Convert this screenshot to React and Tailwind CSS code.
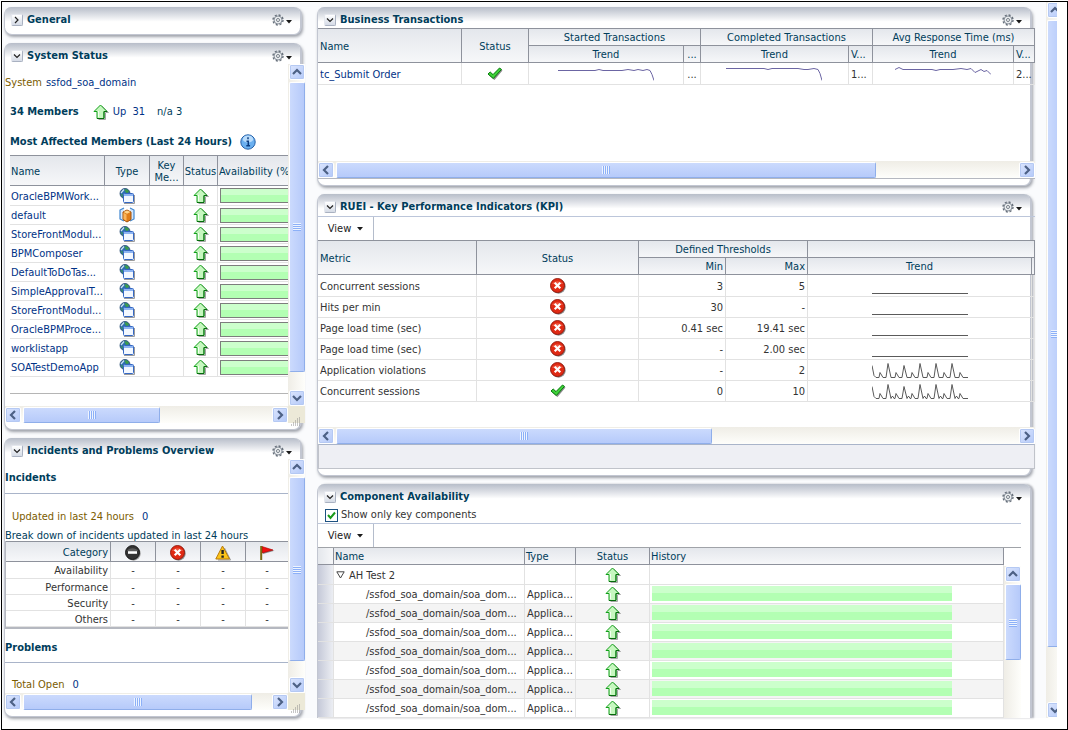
import clsx from 'clsx'

const members = [
  ['OracleBPMWork...', 'app'],
  ['default', 'box'],
  ['StoreFrontModul...', 'app'],
  ['BPMComposer', 'app'],
  ['DefaultToDoTas...', 'app'],
  ['SimpleApprovalT...', 'app'],
  ['StoreFrontModul...', 'app'],
  ['OracleBPMProce...', 'app'],
  ['worklistapp', 'app'],
  ['SOATestDemoApp', 'app'],
]

const flat = '0,14 96,14'

// one tall spike every 16px with a small bump in between
function spikes(noisy) {
  const pts = ['0,2', '2,12', '4,14']
  for (let i = 0; i < 6; i++) {
    const x = i * 16
    pts.push(`${x + 7},14`, `${x + 8},9`, `${x + 11},14`)
    if (i < 5) {
      pts.push(`${x + 14},14`, `${x + 16},${i === 1 ? 2 : 0}`, `${x + 19},14`)
      if (noisy) pts.push(`${x + 20},12`, `${x + 21},12`, `${x + 22},14`)
    }
  }
  pts.push('96,14')
  return pts.join(' ')
}

const metrics = [
  { name: 'Concurrent sessions', ok: false, min: '3', max: '5', trend: flat },
  { name: 'Hits per min', ok: false, min: '30', max: '-', trend: flat },
  { name: 'Page load time (sec)', ok: false, min: '0.41 sec', max: '19.41 sec', trend: flat },
  { name: 'Page load time (sec)', ok: false, min: '-', max: '2.00 sec', trend: flat },
  { name: 'Application violations', ok: false, min: '-', max: '2', trend: spikes(false) },
  { name: 'Concurrent sessions', ok: true, min: '0', max: '10', trend: spikes(true) },
]

const started = '0,4 37,4 41,3 45,4 64,4 70,3 76,4 80,3 85,4 89,3 92,4 94,8 96,14'
const completed = '0,2 38,2 42,3 46,2 72,2 78,3 82,3 88,2 92,3 94,7 96,14'
const response = '0,3 4,1 8,3 37,3 41,4 45,3 58,3 66,2 72,3 76,2 80,6 84,4 86,3 89,5 92,4 96,8'

const head = 'border-r border-b border-[#8e929c] bg-linear-to-b from-[#e4e7ec] to-[#f6f7f9] font-normal text-[#003d5b] px-0 pt-0.5 pb-0'
const box = 'border-r border-b border-[#e2e2e2] p-0'
const cell = 'border-r border-b border-[#e2e2e2] px-0 pt-0.5 pb-0'

function UpIcon() {
  return (
    <svg width="16" height="16" viewBox="0 0 16 16" className="inline-block shrink-0 align-middle">
      <path d="M12.500 8.500h3L9 2M12.500 9v6.500h-7" fill="none" stroke="#a5a5a5" />
      <path d="M7.500 1L1 7.500H4V14.500H11V7.500H14Z" fill="#c6f7bf" stroke="#12a01a" strokeLinejoin="round" />
      <path d="M11 14.500V7.500h3M4 14.500h7" fill="none" stroke="#056b0c" />
      <path d="M5.500 7v6" stroke="#f2fff0" />
    </svg>
  )
}

function AppIcon() {
  return (
    <svg width="16" height="16" viewBox="0 0 16 16" className="inline-block align-middle">
      <circle cx="6" cy="5.500" r="5" fill="#2c6fae" stroke="#24466e" strokeWidth=".8" />
      <path d="M5.500 1.500c2-.8 4 .2 4.500 2L8 5.500 6.500 4z" fill="#3d9b4c" />
      <path d="M1.500 6l2 .5L4 9.500z" fill="#3d9b4c" />
      <path d="M2 5L5 1.500" stroke="#cfe4f5" strokeWidth="1.200" />
      <path d="M5 15.500H15.500V7" fill="none" stroke="#9b9b9b" />
      <rect x="4.500" y="5.500" width="10" height="9" rx="1" fill="#f3f8ff" stroke="#3568c4" />
      <path d="M5 6h9v2H5z" fill="#8db4f2" />
    </svg>
  )
}

function BoxIcon() {
  return (
    <svg width="16" height="16" viewBox="0 0 16 16" className="inline-block align-middle">
      <path d="M5 1L1 3v9l4 2M11 1l4 2v9l-4 2" fill="#d5e6fa" stroke="#3f86d0" strokeWidth="1.200" />
      <path d="M8 3l4 2v7.500L8 15l-4-2.500V5z" fill="#e07d18" stroke="#a0500a" />
      <path d="M4.500 5L8 3.500 11.500 5 8 6.800z" fill="#ffd48a" />
      <path d="M7.500 7.500v6.500L4.500 12V5.700z" fill="#f9b55c" />
    </svg>
  )
}

function InfoIcon() {
  return (
    <svg width="16" height="16" viewBox="0 0 16 16" className="shrink-0" role="img" aria-label="Information">
      <circle cx="8" cy="8" r="7.200" fill="#6bb0f0" stroke="#2460a8" />
      <ellipse cx="8" cy="5" rx="5.200" ry="3.600" fill="#b9dcfb" />
      <path d="M6.500 7.200H8.300v4.300M6.300 11.700h3.800M8 3.300v2" stroke="#0c3c80" strokeWidth="1.500" fill="none" />
    </svg>
  )
}

function CheckIcon() {
  return (
    <svg width="16" height="14" viewBox="0 0 16 14" className="inline-block align-middle">
      <path d="M2 8.500L4 6.500l3 2.500L13.500 2l2 1.500L7.500 13z" fill="#8c8c8c" />
      <path d="M1 7L3.200 5l2.800 2.600L12.500 1l2 1.400L6.300 11.500z" fill="#3fd23a" stroke="#067a0b" strokeWidth="1" strokeLinejoin="round" />
    </svg>
  )
}

function ErrorIcon() {
  return (
    <svg width="16" height="16" viewBox="0 0 16 16" className="inline-block align-middle">
      <circle cx="8.500" cy="8.500" r="7.200" fill="#8c8c8c" />
      <circle cx="7.500" cy="7.500" r="7" fill="#e02a14" stroke="#8e1408" strokeWidth=".9" />
      <path d="M2 6a6 4.500 0 0 1 11 0z" fill="#ee5a44" />
      <path d="M4.700 4.700l5.600 5.600M10.300 4.700l-5.600 5.600" stroke="#fff" strokeWidth="2.200" />
    </svg>
  )
}

function FatalIcon() {
  return (
    <svg width="16" height="16" viewBox="0 0 16 16" className="inline-block align-middle" role="img" aria-label="Fatal">
      <circle cx="8.500" cy="8.500" r="7.200" fill="#9a9a9a" />
      <circle cx="7.500" cy="7.500" r="7" fill="#333" stroke="#151515" strokeWidth=".9" />
      <path d="M2 6a6 4.500 0 0 1 11 0z" fill="#5c5c5c" />
      <path d="M3 7.500h9" stroke="#fff" strokeWidth="2.600" />
    </svg>
  )
}

function WarningIcon() {
  return (
    <svg width="16" height="16" viewBox="0 0 16 16" className="inline-block align-middle" role="img" aria-label="Warning">
      <path d="M3 15h12.500L9.500 3" fill="none" stroke="#999" />
      <path d="M7.500 1L14.500 14H.8z" fill="#fcc419" stroke="#b87a08" strokeLinejoin="round" />
      <path d="M7.600 5v4M7.600 10.500v2.200" stroke="#222" strokeWidth="2.400" />
    </svg>
  )
}

function FlagIcon() {
  return (
    <svg width="16" height="16" viewBox="0 0 16 16" className="inline-block align-middle" role="img" aria-label="Flagged">
      <path d="M4 3h2l9.500 2.800L4 9z" fill="#8c8c8c" />
      <path d="M3 1.500L14 5 3 8z" fill="#f01010" stroke="#a00" strokeWidth=".6" />
      <path d="M2.200 1v14" stroke="#7a6a10" strokeWidth="2" />
    </svg>
  )
}

function GearIcon() {
  return (
    <svg width="12" height="12" viewBox="0 0 12 12">
      <circle cx="6" cy="6" r="5" fill="none" stroke="#68717c" strokeWidth="1.400" strokeDasharray="2.100 1.827" />
      <circle cx="6" cy="6" r="4" fill="#e9ecee" stroke="#7c8590" strokeWidth=".9" />
      <circle cx="6" cy="6" r="1.500" fill="#fff" stroke="#68717c" strokeWidth=".9" />
    </svg>
  )
}

function Caret({ className }) {
  return (
    <svg width="6" height="4" viewBox="0 0 6 4" className={className}>
      <path d="M0 0h6L3 3.500z" fill="#1a1a1a" />
    </svg>
  )
}

function Spark({ points, color }) {
  return (
    <svg width="96" height="16" viewBox="0 0 96 16" className="mx-auto block">
      <polyline points={points} fill="none" stroke={color} strokeWidth="1" transform="translate(0 .5)" />
    </svg>
  )
}

const arrows = {
  left: 'M7 1L3 5l4 4',
  right: 'M3 1l4 4-4 4',
  up: 'M1 7l4-4 4 4',
  down: 'M1 3l4 4 4-4',
}

function ScrollButton({ dir }) {
  return (
    <button
      type="button"
      aria-label={`Scroll ${dir}`}
      className="flex size-4 shrink-0 items-center justify-center rounded-xs border border-white bg-linear-to-br from-[#dbe5fd] to-[#b4c9f9] shadow-[inset_0_0_0_1px_#b5c9f3]"
    >
      <svg width="10" height="10" viewBox="0 0 10 10">
        <path d={arrows[dir]} fill="none" stroke="#4d6185" strokeWidth="2.200" />
      </svg>
    </button>
  )
}

function HScroll({ size }) {
  return (
    <div className="flex h-[17px] items-center bg-linear-to-b from-[#efede6] to-[#fefefb]">
      <ScrollButton dir="left" />
      <div className="flex h-4 min-w-0 flex-1 pl-0.5">
        <div
          className="flex items-center justify-center gap-px rounded-xs border border-[#8faeea] border-t-white border-l-white bg-linear-to-b from-[#cbdafd] to-[#b6cafa]"
          style={{ width: `${size}%` }}
        >
          {[0, 1, 2, 3].map((i) => (
            <span key={i} className="h-2 w-px bg-[#eef4fe] shadow-[1px_0_#8cb0f8]" />
          ))}
        </div>
      </div>
      <ScrollButton dir="right" />
    </div>
  )
}

function VScroll({ size, className, noEnd }) {
  return (
    <div className={clsx('flex w-[17px] shrink-0 flex-col items-center bg-linear-to-r from-[#efede6] to-[#fefefb]', className)}>
      <ScrollButton dir="up" />
      <div className="w-4 min-h-0 flex-1 pt-0.5">
        <div
          className="flex flex-col items-center justify-center gap-px rounded-xs border border-[#8faeea] border-t-white border-l-white bg-linear-to-r from-[#cbdafd] to-[#b6cafa]"
          style={{ height: `${size}%` }}
        >
          {[0, 1, 2, 3].map((i) => (
            <span key={i} className="h-px w-2 bg-[#eef4fe] shadow-[0_1px_#8cb0f8]" />
          ))}
        </div>
      </div>
      {!noEnd && <ScrollButton dir="down" />}
    </div>
  )
}

// lower edge of a scrolling region: bar plus the resize corner
function BottomScroll({ size }) {
  return (
    <div className="flex">
      <div className="min-w-0 flex-1">
        <HScroll size={size} />
      </div>
      <div className="relative w-[17px] bg-[#ece9d8]">
        <svg width="10" height="10" viewBox="0 0 10 10" className="absolute right-1 -bottom-1">
          <path d="M8 0h1M6 2h1M8 2h1M4 4h1M6 4h1M8 4h1M2 6h1M4 6h1M6 6h1M8 6h1M0 8h1M2 8h1M4 8h1M6 8h1M8 8h1" stroke="#8e8e8e" />
        </svg>
      </div>
    </div>
  )
}

function Panel({ title, closed, open, children }) {
  return (
    <section
      className={clsx(
        'border-l border-r-2 border-[#c2c6d1] bg-white',
        open ? 'rounded-t-lg shadow-[2px_0_2px_rgba(70,75,90,0.4)]' : 'rounded-lg border-b pb-1.5 shadow-[1px_2px_3px_rgba(70,75,90,0.5)]',
      )}
    >
      <header className="flex h-[21px] items-center rounded-t-md bg-linear-to-b from-[#b7bdc9] to-white to-70% pt-1 pr-2 pl-1.5">
        <button
          type="button"
          aria-label={`Toggle ${title}`}
          className="flex size-3 items-center justify-center rounded-xs border border-t-[#e4e7ee] border-l-[#e4e7ee] border-[#a9b1c1] bg-linear-to-b from-white to-[#d5dbe6]"
        >
          <svg width="8" height="8" viewBox="0 0 8 8">
            <path d={closed ? 'M2 1l3 3-3 3' : 'M1 2.500l3 3 3-3'} fill="none" stroke="#222" strokeWidth="1.200" />
          </svg>
        </button>
        <h2 className="flex-1 pl-1 text-[11px] font-bold whitespace-nowrap text-[#003d5b]">{title}</h2>
        <button type="button" aria-label={`${title} options`} className="flex items-center gap-0.5">
          <GearIcon />
          <Caret className="mt-1" />
        </button>
      </header>
      {children}
    </section>
  )
}

function ViewBar() {
  return (
    <div className="flex h-6 border-t border-[#bcc6da]">
      <button type="button" className="flex w-14 items-center justify-center gap-1.5 border-r border-[#b4bccb] text-[#222]">
        View <Caret />
      </button>
    </div>
  )
}

function SystemStatus() {
  return (
    <Panel title="System Status">
      <div className="-mr-[5px]">
        <div className="flex">
          <div className="min-w-0 flex-1 overflow-hidden whitespace-nowrap">
            <p className="flex h-9 items-center gap-1 pt-0.5">
              <span className="text-[#7b5c00]">System</span>
              <a href="#" className="text-[#003286]">ssfod_soa_domain</a>
            </p>
            <p className="flex h-6 items-center pl-[5px]">
              <b className="text-[#003d5b]">34 Members</b>
              <span className="ml-3.5 flex"><UpIcon /></span>
              <a href="#" className="ml-1 text-[#003286]">Up&nbsp; 31</a>
              <span className="ml-3 text-[#003d5b]">n/a 3</span>
            </p>
            <div className="flex h-[31px] items-center gap-2 pt-1 pl-[5px]">
              <h3 className="font-bold text-[#003d5b]">Most Affected Members (Last 24 Hours)</h3>
              <InfoIcon />
            </div>
            <div className="ml-[5px]">
              <table className="w-full table-fixed border-separate border-spacing-0">
                <colgroup>
                  <col className="w-[95px]" />
                  <col className="w-[45px]" />
                  <col className="w-[34px]" />
                  <col className="w-[34px]" />
                  <col />
                </colgroup>
                <thead>
                  <tr className="h-[31px]">
                    <th className={clsx(head, 'border-t pl-px text-left')}>Name</th>
                    <th className={clsx(head, 'border-t')}>Type</th>
                    <th className={clsx(head, 'border-t leading-3')}>Key<br />Me...</th>
                    <th className={clsx(head, 'border-t')}>Status</th>
                    <th className={clsx(head, 'border-t border-r-0 pl-px text-left')}>Availability (%</th>
                  </tr>
                </thead>
                <tbody>
                  {members.map(([name, type], i) => (
                    <tr key={i} className="h-[19px] first:h-5">
                      <td className={clsx(cell, 'overflow-hidden pl-px')}>
                        <a href="#" className="text-[#003286]">{name}</a>
                      </td>
                      <td className={clsx(box, 'text-center leading-4')}>{type === 'box' ? <BoxIcon /> : <AppIcon />}</td>
                      <td className={box} />
                      <td className={clsx(box, 'text-center leading-4')}><UpIcon /></td>
                      <td className={clsx(box, 'border-r-0 pl-0.5')}>
                        <div className="h-[15px] border border-r-0 border-[#7d7d7d] bg-linear-to-b from-[#ccffcc] from-45% to-[#b3ffb3] to-50%" />
                      </td>
                    </tr>
                  ))}
                </tbody>
              </table>
              <div className="mt-4 h-[13px] border-t border-[#b5b5b5]" />
            </div>
          </div>
          <VScroll size={94} />
        </div>
        <BottomScroll size={55} />
      </div>
    </Panel>
  )
}

function Incidents() {
  return (
    <Panel title="Incidents and Problems Overview">
      <div className="-mr-[5px]">
        <div className="flex">
          <div className="min-w-0 flex-1 overflow-hidden whitespace-nowrap">
            <h3 className="flex h-[35px] items-center border-b border-[#a9b4c9] pt-1 font-bold text-[#003d5b]">Incidents</h3>
            <p className="flex h-9 items-center gap-2 pt-2.5 pl-[7px]">
              <span className="text-[#7b5c00]">Updated in last 24 hours</span>
              <a href="#" className="text-[#003286]">0</a>
            </p>
            <table className="w-full table-fixed border-separate border-spacing-0 border-b-2 border-l border-[#b5b8c0]">
              <caption className="h-[11px] text-left leading-[11px] text-[#003d5b]">Break down of incidents updated in last 24 hours</caption>
              <colgroup>
                <col />
                <col className="w-[45px]" />
                <col className="w-[45px]" />
                <col className="w-[45px]" />
                <col className="w-[42px]" />
              </colgroup>
              <thead>
                <tr className="h-[21px]">
                  <th className={clsx(head, 'border-t pr-0.5 text-right')}>Category</th>
                  <th className={clsx(head, 'border-t leading-4')}><FatalIcon /></th>
                  <th className={clsx(head, 'border-t leading-4')}><ErrorIcon /></th>
                  <th className={clsx(head, 'border-t leading-4')}><WarningIcon /></th>
                  <th className={clsx(head, 'border-t border-r-0 leading-4')}><FlagIcon /></th>
                </tr>
              </thead>
              <tbody className="leading-3">
                {['Availability', 'Performance', 'Security', 'Others'].map((name) => (
                  <tr key={name} className="h-4 first:h-[17px]">
                    <td className={clsx(cell, 'pr-0.5 text-right')}>{name}</td>
                    {[0, 1, 2, 3].map((i) => (
                      <td key={i} className={clsx(cell, 'text-center last:border-r-0')}>-</td>
                    ))}
                  </tr>
                ))}
              </tbody>
            </table>
            <h3 className="flex h-[34px] items-center border-b border-[#a9b4c9] pt-1 font-bold text-[#003d5b]">Problems</h3>
            <p className="flex h-[30px] items-center gap-2 pt-3.5 pl-[7px]">
              <span className="text-[#7b5c00]">Total Open</span>
              <a href="#" className="text-[#003286]">0</a>
            </p>
          </div>
          <VScroll size={92} />
        </div>
        <BottomScroll size={92} />
      </div>
    </Panel>
  )
}

function BusinessTransactions() {
  return (
    <Panel title="Business Transactions">
      <div className="-mr-[5px] border-b border-[#b5b8c0] whitespace-nowrap">
        <table className="w-full table-fixed border-separate border-spacing-0">
          <colgroup>
            <col />
            <col className="w-[67px]" />
            <col className="w-[155px]" />
            <col className="w-[17px]" />
            <col className="w-[148px]" />
            <col className="w-[24px]" />
            <col className="w-[141px]" />
            <col className="w-[21px]" />
          </colgroup>
          <thead>
            <tr className="h-[18px]">
              <th rowSpan={2} className={clsx(head, 'border-t pl-0.5 text-left')}>Name</th>
              <th rowSpan={2} className={clsx(head, 'border-t')}>Status</th>
              <th colSpan={2} className={clsx(head, 'border-t')}>Started Transactions</th>
              <th colSpan={2} className={clsx(head, 'border-t')}>Completed Transactions</th>
              <th colSpan={2} className={clsx(head, 'border-t')}>Avg Response Time (ms)</th>
            </tr>
            <tr className="h-[17px]">
              <th className={head}>Trend</th>
              <th className={head}>...</th>
              <th className={head}>Trend</th>
              <th className={clsx(head, 'pl-0.5 text-left')}>V...</th>
              <th className={head}>Trend</th>
              <th className={clsx(head, 'pl-0.5 text-left')}>V...</th>
            </tr>
          </thead>
          <tbody>
            <tr className="h-[22px]">
              <td className={clsx(cell, 'pl-0.5')}>
                <a href="#" className="text-[#003286]">tc_Submit Order</a>
              </td>
              <td className={clsx(box, 'text-center leading-4')}><CheckIcon /></td>
              <td className={box}><Spark points={started} color="#6b65a3" /></td>
              <td className={clsx(cell, 'text-center')}>...</td>
              <td className={box}><Spark points={completed} color="#6b65a3" /></td>
              <td className={clsx(cell, 'pl-0.5')}>1...</td>
              <td className={box}><Spark points={response} color="#6b65a3" /></td>
              <td className={clsx(cell, 'pl-0.5')}>2...</td>
            </tr>
          </tbody>
        </table>
        <div className="pt-[76px]">
          <HScroll size={79} />
        </div>
      </div>
    </Panel>
  )
}

function Kpi() {
  return (
    <Panel title="RUEI - Key Performance Indicators (KPI)">
      <div className="-mr-[5px] pt-px whitespace-nowrap">
        <ViewBar />
        <table className="w-full table-fixed border-separate border-spacing-0">
          <colgroup>
            <col className="w-[159px]" />
            <col className="w-[162px]" />
            <col className="w-[87px]" />
            <col className="w-[82px]" />
            <col />
            <col className="w-[3px]" />
          </colgroup>
          <thead>
            <tr className="h-[18px]">
              <th rowSpan={2} className={clsx(head, 'border-t pl-0.5 text-left')}>Metric</th>
              <th rowSpan={2} className={clsx(head, 'border-t')}>Status</th>
              <th colSpan={2} className={clsx(head, 'border-t')}>Defined Thresholds</th>
              <th colSpan={2} className={clsx(head, 'border-t')} />
            </tr>
            <tr className="h-[17px]">
              <th className={clsx(head, 'pr-0.5 text-right')}>Min</th>
              <th className={clsx(head, 'pr-0.5 text-right')}>Max</th>
              <th className={head}>Trend</th>
              <th className={head} />
            </tr>
          </thead>
          <tbody>
            {metrics.map((m, i) => (
              <tr key={i} className="h-[21px] first:h-[22px]">
                <td className={clsx(cell, 'pl-0.5')}>{m.name}</td>
                <td className={clsx(box, 'text-center leading-4')}>{m.ok ? <CheckIcon /> : <ErrorIcon />}</td>
                <td className={clsx(cell, 'pr-0.5 text-right')}>{m.min}</td>
                <td className={clsx(cell, 'pr-0.5 text-right')}>{m.max}</td>
                <td className={cell}><Spark points={m.trend} color="#5a5a5a" /></td>
                <td className={box} />
              </tr>
            ))}
          </tbody>
        </table>
        <div className="pt-[25px]">
          <HScroll size={55} />
        </div>
        <div className="h-[25px] border border-t-[#a9b4c9] border-[#c0c3ca] bg-[#eeeff4]" />
      </div>
    </Panel>
  )
}

function ComponentAvailability() {
  return (
    <Panel title="Component Availability" open>
      <div className="pr-[9px] whitespace-nowrap">
        <label className="flex h-[18px] items-center gap-1 pt-0.5 pl-[7px]">
          <input
            type="checkbox"
            defaultChecked
            className="peer size-[13px] appearance-none border border-[#1d5281] bg-white"
          />
          <svg width="9" height="9" viewBox="0 0 9 9" className="-ml-[15px] mr-px hidden peer-checked:block">
            <path d="M1 4l2.500 3L8 1.500" fill="none" stroke="#1a9a1a" strokeWidth="2" />
          </svg>
          Show only key components
        </label>
        <ViewBar />
        <div className="flex border-t border-[#a0a3a8]">
          <table className="min-w-0 flex-1 table-fixed border-separate border-spacing-0">
            <colgroup>
              <col className="w-[16px]" />
              <col className="w-[191px]" />
              <col className="w-[51px]" />
              <col className="w-[74px]" />
              <col />
            </colgroup>
            <thead>
              <tr className="h-[17px]">
                <th className={clsx(head, 'bg-linear-to-r from-[#c5c9d8] to-[#eceef3]')} />
                <th className={clsx(head, 'pl-px text-left')}>Name</th>
                <th className={clsx(head, 'pl-px text-left')}>Type</th>
                <th className={head}>Status</th>
                <th className={clsx(head, 'pl-px text-left')}>History</th>
              </tr>
            </thead>
            <tbody>
              <tr className="h-5">
                <td className={clsx(box, 'bg-linear-to-r from-[#c5c9d8] to-[#eceef3]')} />
                <td className={clsx(cell, 'pl-0.5')}>
                  <button type="button" aria-label="Collapse AH Test 2" className="mr-1">
                    <svg width="9" height="8" viewBox="0 0 9 8">
                      <path d="M.8.8h7.400L4.500 7z" fill="#fff" stroke="#444" />
                    </svg>
                  </button>
                  AH Test 2
                </td>
                <td className={box} />
                <td className={clsx(box, 'text-center leading-4')}><UpIcon /></td>
                <td className={box} />
              </tr>
              {[0, 1, 2, 3, 4, 5, 6].map((i) => (
                <tr key={i} className="h-[19px] even:bg-white odd:bg-[#f4f4f4]">
                  <td className={clsx(box, 'bg-linear-to-r from-[#c5c9d8] to-[#eceef3]')} />
                  <td className={clsx(cell, 'overflow-hidden pl-8')}>/ssfod_soa_domain/soa_dom...</td>
                  <td className={clsx(cell, 'pl-0.5')}>Applica...</td>
                  <td className={clsx(box, 'text-center leading-4')}><UpIcon /></td>
                  <td className={clsx(box, 'pl-0.5 align-top')}>
                    <div className="mt-px h-[15px] w-[300px] bg-linear-to-b from-[#ccffcc] from-45% to-[#b3ffb3] to-50%" />
                  </td>
                </tr>
              ))}
            </tbody>
          </table>
          <VScroll size={57} noEnd className="mt-[18px]" />
        </div>
      </div>
    </Panel>
  )
}

export default function App() {
  return (
    <div className="flex min-h-screen bg-white pt-px pl-px font-['DejaVu_Sans_Condensed','DejaVu_Sans',sans-serif] text-[11px] leading-[14px] text-[#333]">
      <div className="flex flex-1 border border-black pr-[10px] pb-[11px]">
        <main className="flex min-w-0 flex-1 gap-[15px] bg-[#fafbfd] pt-[5px] pr-[14px] pl-0.5">
          <div className="flex w-[298px] shrink-0 flex-col gap-2">
            <Panel title="General" closed />
            <SystemStatus />
            <Incidents />
          </div>
          <div className="flex min-w-0 flex-1 flex-col gap-2">
            <BusinessTransactions />
            <Kpi />
            <ComponentAvailability />
          </div>
        </main>
        <div className="flex w-[11px] overflow-hidden">
          <VScroll size={92} />
        </div>
      </div>
    </div>
  )
}
